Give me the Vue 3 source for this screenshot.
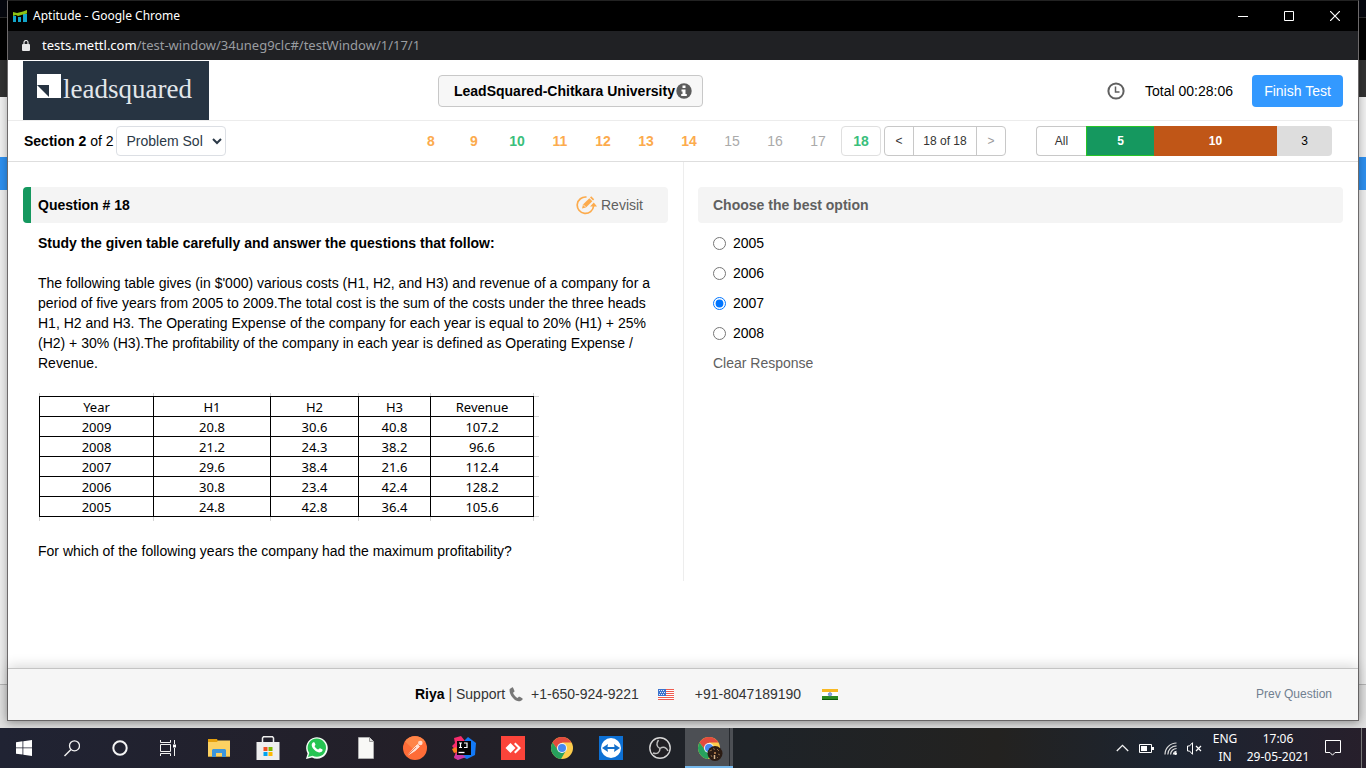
<script setup>
import { ref } from 'vue'

const questions = [
  { n: 8, s: 'skip' }, { n: 9, s: 'skip' }, { n: 10, s: 'done' }, { n: 11, s: 'skip' },
  { n: 12, s: 'skip' }, { n: 13, s: 'skip' }, { n: 14, s: 'skip' }, { n: 15, s: 'none' },
  { n: 16, s: 'none' }, { n: 17, s: 'none' }, { n: 18, s: 'done current' }
]
const columns = ['Year', 'H1', 'H2', 'H3', 'Revenue']
const rows = [
  ['2009', '20.8', '30.6', '40.8', '107.2'],
  ['2008', '21.2', '24.3', '38.2', '96.6'],
  ['2007', '29.6', '38.4', '21.6', '112.4'],
  ['2006', '30.8', '23.4', '42.4', '128.2'],
  ['2005', '24.8', '42.8', '36.4', '105.6']
]
const options = ['2005', '2006', '2007', '2008']
const answer = ref('2007')
const section = ref('Problem Sol')
</script>

<template>
  <div class="screen">
    <div class="desktop">
      <div class="window">
        <div class="titlebar">
          <svg width="14" height="12" viewBox="0 0 14 12" aria-hidden="true">
            <path d="M0 6h3v6H0zM5 7h3v5H5zM10 4h4v8h-4z" fill="#12a5c9" />
            <path d="M0 6V2l4 1 6-1.500 4-1.500v3.500l-4 1-5 1.500-2-1z" fill="#8cc314" />
            <path d="M4 7v5M9 6v6" stroke="#000" stroke-width="1" />
          </svg>
          <span class="wtitle">Aptitude - Google Chrome</span>
          <div class="wbtns">
            <button aria-label="Minimize"><svg width="10" height="10" viewBox="0 0 10 10"><path d="M0 5.500h10" stroke="#fff" /></svg></button>
            <button aria-label="Maximize"><svg width="10" height="10" viewBox="0 0 10 10"><path d="M.5.500h9v9h-9z" stroke="#fff" fill="none" /></svg></button>
            <button aria-label="Close"><svg width="10" height="10" viewBox="0 0 10 10"><path d="M0 0l10 10M10 0L0 10" stroke="#fff" stroke-width="1.200" /></svg></button>
          </div>
        </div>
        <div class="address">
          <svg width="8" height="11" viewBox="0 0 8 11" aria-hidden="true">
            <rect y="4" width="8" height="7" rx="1" fill="#e8e8e8" />
            <path d="M2 5V2.500a2 2 0 0 1 4 0V5" fill="none" stroke="#e8e8e8" stroke-width="1.200" />
          </svg>
          <span class="url"><b>tests.mettl.com</b>/test-window/34uneg9clc#/testWindow/1/17/1</span>
        </div>

        <header class="head">
          <div class="brand">
            <div class="logo">
              <svg width="24" height="24" viewBox="0 0 24 24" aria-hidden="true">
                <path d="M0 0h24v24H0z" fill="#fff" />
                <path d="M0 11h12v12z" fill="#273442" />
              </svg>
              <span>leadsquared</span>
            </div>
          </div>
          <button class="testname">LeadSquared-Chitkara University
            <svg width="16" height="16" viewBox="0 0 16 16" aria-hidden="true">
              <circle cx="8" cy="8" r="7.700" fill="#5c5c5c" />
              <path d="M6.500 2.500h3V5h-3zM5.500 6.500h4v4.500h1.300v2H5.200v-2h1.300V8.500h-1z" fill="#fff" />
            </svg>
          </button>
          <div class="timer">
            <svg width="18" height="18" viewBox="0 0 18 18" aria-hidden="true">
              <circle cx="9" cy="9" r="7.600" fill="none" stroke="#606060" stroke-width="2" />
              <path d="M8.500 4.500V10h4" fill="none" stroke="#606060" stroke-width="1.500" />
            </svg>
            <span>Total 00:28:06</span>
          </div>
          <button class="finish">Finish Test</button>
        </header>

        <nav class="nav">
          <label class="section" for="section"><b>Section 2</b> of 2</label>
          <select id="section" v-model="section"><option>Problem Sol</option></select>
          <div class="numbers">
            <button v-for="q in questions" :key="q.n" :class="q.s">{{ q.n }}</button>
          </div>
          <div class="pager">
            <button aria-label="Previous">&lt;</button>
            <span>18 of 18</span>
            <button class="off" aria-label="Next">&gt;</button>
          </div>
          <div class="filter">
            <button class="all">All</button>
            <button class="five">5</button>
            <button class="ten">10</button>
            <button class="three">3</button>
          </div>
        </nav>

        <main class="main">
          <section class="question">
            <div class="bar qbar">
              <h2>Question # 18</h2>
              <button class="revisit">
                <svg width="21" height="19" viewBox="0 0 21 19" aria-hidden="true">
                  <path d="M10.500 1.100A8.200 8.200 0 1 0 17.600 10" fill="none" stroke="#fcab4d" stroke-width="1.700" />
                  <path d="M14 10.500l3.800-4 3.200 4z" fill="#fcab4d" />
                  <path d="M6 12.500l1-4 6.300-6.300 3 3L10 11.500z" fill="#fcab4d" />
                  <path d="M14 1.500l1.200-1.200 3 3L17 4.500z" fill="#fcab4d" />
                  <path d="M7 8.500l3 3" stroke="#f4f4f4" stroke-width=".8" />
                </svg>
                Revisit
              </button>
            </div>
            <div class="text">
              <p><b>Study the given table carefully and answer the questions that follow:</b></p>
              <p>The following table gives (in $'000) various costs (H1, H2, and H3) and revenue of a company for a period of five years from 2005 to 2009.The total cost is the sum of the costs under the three heads H1, H2 and H3. The Operating Expense of the company for each year is equal to 20% (H1) + 25% (H2) + 30% (H3).The profitability of the company in each year is defined as Operating Expense / Revenue.</p>
              <div class="sheet">
                <table>
                  <colgroup><col class="c1"><col class="c2"><col class="c3"><col class="c4"><col class="c5"></colgroup>
                  <thead><tr><th v-for="c in columns" :key="c" scope="col">{{ c }}</th></tr></thead>
                  <tbody>
                    <tr v-for="r in rows" :key="r[0]"><td v-for="(v, i) in r" :key="i">{{ v }}</td></tr>
                  </tbody>
                </table>
              </div>
              <p>For which of the following years the company had the maximum profitability?</p>
            </div>
          </section>
          <section class="answers">
            <div class="bar"><h2 class="grey">Choose the best option</h2></div>
            <div class="choices">
              <label v-for="o in options" :key="o">
                <input v-model="answer" type="radio" name="answer" :value="o">{{ o }}
              </label>
              <button class="clear">Clear Response</button>
            </div>
          </section>
        </main>

        <footer class="foot">
          <span class="who"><b>Riya</b> | Support</span>
          <svg class="phone" width="14" height="15" viewBox="0 0 14 15" aria-hidden="true">
            <path d="M3 .5L.7 2C-.2 6 4 13.500 9.500 14.300c1.600.2 3-.6 4-1.800.4-.5.200-1-.3-1.300L10.800 9.800c-.5-.3-1-.2-1.300.2L8.700 11C6.800 10.300 4.500 7.500 4 5.700l1-.6c.5-.3.6-.8.4-1.300L4.200 1C4 .4 3.500.200 3 .5z" fill="#777" />
          </svg>
          <span>+1-650-924-9221</span>
          <svg class="us" width="16" height="11" viewBox="0 0 16 11" aria-hidden="true">
            <path d="M0 0h16v11H0z" fill="#fff" />
            <path d="M0 .5h16M0 2.500h16M0 4.500h16M0 6.500h16M0 8.500h16M0 10.500h16" stroke="#ee5b50" />
            <path d="M0 0h8v7H0z" fill="#3d74ce" />
            <path d="M1 1.500h6M2 3.500h6M1 5.500h6" stroke="#dfe9fa" stroke-dasharray="1 1" />
          </svg>
          <span>+91-8047189190</span>
          <svg class="in" width="16" height="11" viewBox="0 0 16 11" aria-hidden="true">
            <path d="M0 0h16v4H0z" fill="#f8b823" /><path d="M0 3h16v4H0z" fill="#fff" />
            <path d="M0 7h16v4H0z" fill="#2c8a22" /><path d="M0 10h16v1H0z" fill="#0b570b" />
            <circle cx="8" cy="5.300" r="1.700" fill="#8aa6df" stroke="#5676bd" stroke-width=".6" />
          </svg>
          <button class="prev">Prev Question</button>
        </footer>
      </div>
    </div>

    <div class="taskbar">
      <button aria-label="Start"><svg width="16" height="16" viewBox="0 0 16 16"><path d="M0 2.200L6.500 1.300v6.200H0zM7.300 1.200L16 0v7.500H7.300zM0 8.300h6.500v6.300L0 13.700zM7.300 8.300H16V16l-8.700-1.200z" fill="#fff" /></svg></button>
      <button aria-label="Search"><svg width="16" height="17" viewBox="0 0 16 17"><circle cx="10.500" cy="5.800" r="5" fill="none" stroke="#f2f2f2" stroke-width="1.300" /><path d="M7 9.500L.5 16" stroke="#f2f2f2" stroke-width="1.500" /></svg></button>
      <button aria-label="Cortana"><svg width="16" height="16" viewBox="0 0 16 16"><circle cx="8" cy="8" r="6.700" fill="none" stroke="#f4f4f4" stroke-width="2" /></svg></button>
      <button aria-label="Task view"><svg width="16" height="16" viewBox="0 0 16 16"><path d="M.5 0v2.500h10V0M.5 16v-2.500h10V16M.5 4.500h10v7H.500zM14.500 0v4M14.500 8v8" fill="none" stroke="#f2f2f2" /><path d="M13 4.500h3v3h-3z" fill="#fff" /></svg></button>
      <div class="apps">
        <button aria-label="File Explorer"><svg width="22" height="18" viewBox="0 0 22 18"><path d="M0 0h9l1 2h12v15.500H0z" fill="#e5a00d" /><path d="M0 3h9l1-1.500h12v16H0z" fill="#fcd162" /><path d="M4 18v-7l1-1h12l1 1v7h-4v-4H8v4z" fill="#3c96dd" /></svg></button>
        <button aria-label="Store"><svg width="24" height="24" viewBox="0 0 24 24"><path d="M6.500 7V2l1-1.200h9l1 1.200v5" fill="none" stroke="#eee" stroke-width="1.500" /><path d="M.5 6h23v18H.500z" fill="#eee" /><path d="M7.500 11h4v4h-4z" fill="#f04f23" /><path d="M12.500 11h4v4h-4z" fill="#7eb900" /><path d="M7.500 16h4v4h-4z" fill="#00a3ef" /><path d="M12.500 16h4v4h-4z" fill="#feb801" /></svg></button>
        <button aria-label="WhatsApp"><svg width="22" height="22" viewBox="0 0 22 22"><path d="M0 22l1.600-5.600A10.800 10.800 0 1 1 6 20.600z" fill="#f4fff6" /><path d="M2 20l1.300-4A9.200 9.200 0 1 1 6.500 18.800z" fill="#25c552" /><path d="M7.300 5.300c-3 2-1.300 5.500 1.500 8 2.500 2.300 5.700 3.200 7.500.8.500-.8.400-1.500-.2-1.900l-2-1c-.7-.3-1.300 1.300-2 1.200-1.600-.5-3-2-3.500-3.200.100-.6 1.200-1.200.8-2L8.500 5.500c-.3-.4-.7-.5-1.200-.2z" fill="#fff" /></svg></button>
        <button aria-label="Document"><svg width="16" height="22" viewBox="0 0 16 22"><path d="M.5.500h11l4 4v17H.500z" fill="#f8f8f6" stroke="#bbb" stroke-width=".7" /><path d="M11.500.500v4h4" fill="#ddd" stroke="#888" stroke-width=".8" /></svg></button>
        <button aria-label="Postman"><svg width="24" height="24" viewBox="0 0 24 24"><circle cx="12" cy="12" r="12" fill="#ff6c37" /><path d="M2 5.500A12 12 0 0 1 22 5.500L10 13z" fill="#ff8548" /><path d="M5 19l5.500-6.500 4-4 2 2-4.300 4.200z" fill="#ffe0d2" stroke="#fff" stroke-width=".6" /><circle cx="17.300" cy="7" r="2.300" fill="#ffdac9" /><path d="M5 19l8-8" stroke="#d44918" stroke-width=".6" /></svg></button>
        <button aria-label="IntelliJ IDEA"><svg width="24" height="24" viewBox="0 0 24 24"><path d="M2 2l7-2 4 5-7 19-4-2 2-7-4-5 3-3z" fill="#f92c6c" /><path d="M0 13l4-2 2 5-4 1z" fill="#fc801d" /><path d="M13 4l3-3 8 6-1 12-8 4-9-4z" fill="#1379f6" /><path d="M2 21l4-5 8 5-8 3z" fill="#c739a8" /><path d="M5 5h14v14H5z" fill="#050505" /><path d="M7 7h3M8.500 7v4.500M7 11.500h3M12 7h3v4.500h-3" fill="none" stroke="#fff" stroke-width="1.200" /><path d="M6.500 16.500h6" stroke="#fff" stroke-width="1.300" /></svg></button>
        <button aria-label="AnyDesk"><svg width="24" height="24" viewBox="0 0 24 24"><path d="M0 0h24v24H0z" fill="#fb443a" /><path d="M9.500 7l5 5-5 5-5-5z" fill="#fff" /><path d="M13 8l1.500-1.500L20 12l-5.500 5.500L13 16l4-4z" fill="#fff" /></svg></button>
        <button aria-label="Chrome"><svg width="22" height="22" viewBox="0 0 22 22"><circle cx="11" cy="11" r="11" fill="#fccc4c" /><path d="M1.500 5.500A11 11 0 0 1 20.500 5.500H11L7 13z" fill="#e24b3e" /><path d="M1.500 5.500A11 11 0 0 0 10 22l5-8.500-8-.5z" fill="#27a15d" /><circle cx="11" cy="11" r="5" fill="#f5f5f5" /><circle cx="11" cy="11" r="4" fill="#4688f1" /></svg></button>
        <button aria-label="TeamViewer"><svg width="24" height="24" viewBox="0 0 24 24"><path d="M0 0h24v24H0z" fill="#0d70d4" /><circle cx="12" cy="12" r="10" fill="#fff" /><path d="M3 12l6-4-.5 3h7L15 8l6 4-6 4 .5-3h-7l.5 3z" fill="#136fca" /></svg></button>
        <button aria-label="OBS"><svg width="22" height="22" viewBox="0 0 22 22"><circle cx="11" cy="11" r="10.200" fill="#201f23" stroke="#d6d6d6" stroke-width="1.400" /><path d="M11 11.500C7.500 10 7 6.500 9.500 3M11 11.500c3.500-2.500 6.500-1 8 2.500M11 11.500c0 4-3 6-7 4.500" fill="none" stroke="#bdbdbd" stroke-width="1.500" /></svg></button>
        <button class="active" aria-label="Aptitude"><svg width="25" height="24" viewBox="0 0 25 24"><circle cx="11" cy="11" r="11" fill="#fccc4c" /><path d="M1.500 5.500A11 11 0 0 1 20.500 5.500H11L7 13z" fill="#e24b3e" /><path d="M1.500 5.500A11 11 0 0 0 10 22l5-8.500-8-.5z" fill="#27a15d" /><circle cx="11" cy="11" r="5" fill="#f5f5f5" /><circle cx="11" cy="11" r="4" fill="#4688f1" /><circle cx="17" cy="16.500" r="7.500" fill="#2b1c14" /><path d="M11.500 14l2.500-1M15 11.500l2 1M19 12l2 2M13 18l1 2M20 17l2 1M19 21l1-1" stroke="#8b6844" /><path d="M17 15v2" stroke="#c98c55" stroke-width="1.500" /><path d="M16.500 18v4" stroke="#d9b890" stroke-width="1.500" /></svg></button>
      </div>
      <div class="tray">
        <button aria-label="Hidden icons"><svg width="13" height="8" viewBox="0 0 13 8"><path d="M.8 7l5.700-5.700L12.200 7" fill="none" stroke="#f2f2f2" stroke-width="1.300" /></svg></button>
        <button aria-label="Battery"><svg width="15" height="9" viewBox="0 0 15 9"><path d="M.5.500h12v8H.500z" fill="none" stroke="#fff" /><path d="M13 3h2v3h-2zM2 2h6v5H2z" fill="#fff" /></svg></button>
        <button aria-label="Network"><svg width="13" height="13" viewBox="0 0 13 13"><path d="M1 12.500A11.500 11.500 0 0 1 12.500 1M3.800 12.500a8.700 8.700 0 0 1 8.700-8.700M6.600 12.500a6 6 0 0 1 6-6" fill="none" stroke="#ddd" stroke-width="1.200" /><path d="M9.300 12.500a3.200 3.200 0 0 1 3.200-3.200" fill="none" stroke="#fff" /><circle cx="11.500" cy="11.500" r="1.500" fill="#fff" /></svg></button>
        <button aria-label="Volume"><svg width="15" height="13" viewBox="0 0 15 13"><path d="M.5 4h2l3-3.300v11.600L2.500 9h-2z" fill="none" stroke="#fff" /><path d="M9 4l5 5M14 4L9 9" stroke="#fff" stroke-width="1.200" /></svg></button>
        <div class="lang">ENG<br>IN</div>
        <div class="clock">17:06<br>29-05-2021</div>
        <button class="note" aria-label="Notifications"><svg width="16" height="16" viewBox="0 0 16 16"><path d="M.5.500h15v12H10l-2.500 2.700L5 12.500H.500z" fill="none" stroke="#fff" /></svg></button>
        <span class="peek"></span>
      </div>
    </div>
  </div>
</template>

<style>
body { margin: 0; }
</style>

<style scoped>
* { box-sizing: border-box; }
.screen { min-height: 100vh; display: flex; flex-direction: column; font: 14px/20px "Liberation Sans", Arial, sans-serif; color: #000; }
button { font: inherit; color: inherit; background: none; border: 0; padding: 0; margin: 0; }
svg { display: block; flex: none; }
h2, p { margin: 0; font-size: 14px; line-height: 20px; }
.desktop {
  flex: 1; display: flex; padding: 0 7px 7px;
  background: linear-gradient(#06080f 17px, #2d2d2d 17px, #2d2d2d 18px, #000 18px, #000 60px, #323232 60px, #323232 97px, #efefef 97px, #efefef 157px, #2d8fee 157px, #2d8fee 190px, #ececec 190px, #ececec 684px, #b5b5b5 684px, #b5b5b5 685px, #e0e0e0 685px);
}
.window { flex: 1; min-width: 0; display: flex; flex-direction: column; background: #fff; border: 1px solid #6d6a6b; border-top-color: #222; box-shadow: 0 2px 8px rgba(0,0,0,.3); }
.titlebar { height: 30px; background: #000; color: #fff; display: flex; align-items: center; padding-left: 5px; gap: 6px; font: 12px/16px "Noto Sans", "Open Sans", sans-serif; }
.wbtns { margin-left: auto; display: flex; }
.wbtns button { width: 46px; height: 30px; display: flex; align-items: center; justify-content: center; }
.address { height: 29px; background: #202124; color: #9a9da1; display: flex; align-items: center; padding: 0 0 1px 14px; gap: 12px; font: 13px/20px "Noto Sans", sans-serif; }
.address b { font-weight: 400; color: #fff; }
.head { height: 61px; border-bottom: 1px solid #ececec; display: flex; align-items: center; padding: 2px 15px 0; }
.brand { flex: 0 0 415px; align-self: flex-end; }
.logo { width: 186px; height: 59px; background: #273442; color: #e2e6ea; display: flex; align-items: flex-start; padding: 13px 0 0 14px; gap: 2px; font: 27px/30px "Liberation Serif", serif; }
.testname { height: 32px; border: 1px solid #c8c8c8; border-radius: 4px; background: #f7f7f7; padding: 0 10px 0 15px; font-weight: 700; display: flex; align-items: center; gap: 1px; }
.timer { margin-left: auto; display: flex; align-items: center; gap: 20px; }
.finish { margin-left: 19px; width: 91px; height: 32px; border-radius: 4px; background: #3399ff; color: #fff; }
.nav { height: 41px; border-bottom: 1px solid #dedede; display: flex; align-items: center; padding: 0 26px 0 16px; }
select { margin-left: 2px; width: 110px; height: 30px; border: 1px solid #dcdfe4; border-radius: 4px; background: #fff; color: #2b3947; font: inherit; padding: 0 0 0 6px; }
.numbers { margin-left: auto; display: flex; gap: 3px; }
.numbers button { width: 40px; height: 30px; border: 1px solid transparent; border-radius: 4px; }
.numbers .skip { color: #fcab4d; font-weight: 700; }
.numbers .done { color: #3abf7c; font-weight: 700; }
.numbers .none { color: #aaa; }
.numbers .current { border-color: #dfdfdf; }
.pager { margin-left: 3px; display: flex; height: 30px; border: 1px solid #c8c8c8; border-radius: 4px; font-size: 12px; line-height: 28px; color: #333; text-align: center; }
.pager button { width: 28px; }
.pager span { width: 64px; border: solid #c8c8c8; border-width: 0 1px; }
.pager .off { color: #999; }
.filter { margin-left: 30px; display: flex; height: 30px; font-size: 12px; }
.all { width: 50px; border: 1px solid #c8c8c8; border-right: 0; border-radius: 4px 0 0 4px; color: #333; }
.five { width: 68px; background: #15985f; border: 1px solid #28c428; border-right: 0; color: #fff; font-weight: 700; }
.ten { width: 123px; background: #c05617; color: #fff; font-weight: 700; }
.three { width: 55px; background: #ddd; border-radius: 0 4px 4px 0; }
.main { flex: 1; display: flex; align-items: flex-start; }
.question { flex: 1; min-width: 0; border-right: 1px solid #ededed; min-height: 418px; padding: 25px 15px 0; }
.answers { flex: 1; min-width: 0; padding: 25px 15px 0 14px; }
.bar { height: 36px; background: #f4f4f4; border-radius: 4px; display: flex; align-items: center; padding: 0 25px 0 15px; }
.qbar { border-left: 8px solid #15985f; padding-left: 7px; }
.grey { color: #606060; }
.revisit { margin-left: auto; display: flex; align-items: center; gap: 4px; color: #606060; }
.text { padding: 10px 15px 0; }
.text p { margin-bottom: 20px; }
/* Sheet grid lines run slightly past the table's own borders */
.sheet {
  width: 500px; margin: 0 0 20px 1px; padding: 3px 5px 4px 0;
  background:
    repeating-linear-gradient(#d4d4d4 0 1px, transparent 1px 20px) 0 3px / 100% 121px no-repeat,
    linear-gradient(90deg, #d4d4d4 1px, transparent 1px 114px, #d4d4d4 114px 115px, transparent 115px 231px, #d4d4d4 231px 232px, transparent 232px 319px, #d4d4d4 319px 320px, transparent 320px 391px, #d4d4d4 391px 392px, transparent 392px 494px, #d4d4d4 494px 495px, transparent 495px);
}
table { border-collapse: collapse; table-layout: fixed; width: 495px; background: #fff; font: 13px/17px "Noto Sans", sans-serif; text-align: center; }
th, td { border: 1px solid #000; padding: 2px 0 0; font-weight: 400; }
.c1 { width: 114px; } .c2 { width: 117px; } .c3 { width: 88px; } .c4 { width: 72px; } .c5 { width: 103px; }
.choices { padding: 10px 15px 0; display: flex; flex-direction: column; align-items: flex-start; gap: 10px; }
.choices label { display: flex; align-items: center; gap: 7px; }
.choices input { margin: 0; width: 13px; height: 13px; accent-color: #0075ff; }
.clear { color: #606060; }
.foot { height: 52px; background: #f6f6f6; border-top: 1px solid #c4c4c4; box-shadow: 0 -2px 12px rgba(0,0,0,.16); display: flex; align-items: center; padding: 0 26px 1px 407px; color: #333; }
.foot b { color: #000; }
.phone { margin: 0 8px 0 4px; }
.us { margin: 0 21px 0 19px; }
.in { margin: 0 21px; }
.prev { margin-left: auto; font-size: 12px; color: #708090; }
.taskbar { height: 40px; background: linear-gradient(90deg, #202333, #231f28 30%, #1e2328 55%, #232220 73%, #1c2431 86%, #271f2b); color: #fff; display: flex; align-items: stretch; }
.taskbar button { width: 48px; display: flex; align-items: center; justify-content: center; }
.apps { display: flex; gap: 1px; margin-left: 3px; }
.taskbar .active { background: linear-gradient(90deg, #4c4f54 44px, #26292e 44px, #26292e 45px, #4c4f54 45px); border-bottom: 2px solid #76b9ed; }
.active svg { margin: 4px 0 0 3px; }
.tray { margin-left: auto; display: flex; align-items: center; font: 12px/18px "Noto Sans", "Open Sans", sans-serif; text-align: center; }
.tray button { width: 24px; height: 40px; }
.lang { width: 38px; }
.clock { width: 68px; }
.tray .note { width: 42px; margin-right: 7px; }
.peek { width: 5px; height: 40px; border-left: 1px solid #777; }
</style>
